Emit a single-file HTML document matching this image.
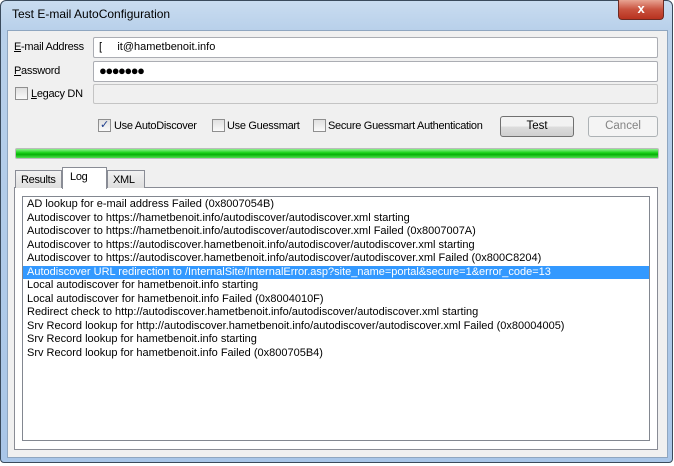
<!DOCTYPE html>
<html><head><meta charset="utf-8"><style>
*{margin:0;padding:0;box-sizing:border-box}
body{width:674px;height:466px;background:#fff;position:relative;overflow:hidden;font-family:"Liberation Sans",sans-serif;font-size:11px;letter-spacing:-0.3px;color:#000}
.a{position:absolute}
.frame{left:0;top:0;width:673px;height:463px;border:1px solid #3a4a5c;border-radius:6px 6px 4px 4px;background:linear-gradient(#c9dcf0,#b8d0ea 30px,#a9c6e8)}
.client{left:7px;top:30px;width:661px;height:428px;background:#f0f0f0;border:1px solid #8fa6c0}
.inp{background:#fff;border:1px solid #abadb3;border-radius:2px}
.cb{width:13px;height:13px;border:1px solid #8f8f8f;background:linear-gradient(#e0e0e0,#fafafa);}
.btn{border:1px solid #707070;border-radius:3px;background:linear-gradient(#f2f2f2 50%,#dddddd 50%,#cfcfcf);text-align:center;line-height:19px;font-size:11.5px;letter-spacing:0}
.log div{height:13.5px;line-height:13.5px;white-space:nowrap;padding-left:4px;font-size:11px;letter-spacing:0}
</style></head><body>
<div class="a frame"></div>
<div class="a" style="left:12px;top:7px;font-size:12px;letter-spacing:0;color:#000">Test E-mail AutoConfiguration</div>
<div class="a" style="left:618px;top:0;width:46px;height:20px;border:1px solid #6d2a22;border-top:none;border-radius:0 0 4px 4px;background:linear-gradient(#e8a493,#c9523e 50%,#b8321f);color:#fff;font-weight:bold;font-size:13px;text-align:center;line-height:18px">x</div>
<div class="a client"></div>
<div class="a" style="left:14px;top:41px"><u>E</u>-mail Address</div>
<div class="a" style="left:14px;top:65px"><u>P</u>assword</div>
<div class="a cb" style="left:15px;top:87px"></div>
<div class="a" style="left:31px;top:88px"><u>L</u>egacy DN</div>
<div class="a inp" style="left:93px;top:37px;width:565px;height:21px;padding:3px 5px;letter-spacing:0">[&nbsp;&nbsp;&nbsp;&nbsp;&nbsp;it@hametbenoit.info</div>
<div class="a inp" style="left:93px;top:61px;width:565px;height:21px;padding:1px 5px;font-size:13px;letter-spacing:-1.5px">●●●●●●●</div>
<div class="a inp" style="left:93px;top:84px;width:565px;height:20px;background:#f0f0f0;border-color:#c4c4c4"></div>
<div class="a cb" style="left:98px;top:119px;color:#1d3c8c;font-size:11px;line-height:11px;text-align:center">✓</div>
<div class="a" style="left:114px;top:120px">Use AutoDiscover</div>
<div class="a cb" style="left:212px;top:119px"></div>
<div class="a" style="left:227px;top:120px">Use Guessmart</div>
<div class="a cb" style="left:313px;top:119px"></div>
<div class="a" style="left:328px;top:120px">Secure Guessmart Authentication</div>
<div class="a btn" style="left:500px;top:116px;width:74px;height:21px">Test</div>
<div class="a btn" style="left:588px;top:116px;width:70px;height:21px;border-color:#adb2b5;background:#f4f4f4;color:#838383">Cancel</div>
<div class="a" style="left:15px;top:148px;width:644px;height:11px;border:1px solid #bcbcbc;border-radius:2px;background:linear-gradient(#8ef08e,#1ed41e 40%,#06b006 60%,#4ee04e)"></div>
<div class="a" style="left:14px;top:187px;width:644px;height:263px;border:1px solid #898c95;background:#fff"></div>
<div class="a" style="left:15px;top:170px;width:47px;height:18px;border:1px solid #898c95;border-bottom:none;background:linear-gradient(#f2f2f2,#dedede);padding:3px 0 0 5px">Results</div>
<div class="a" style="left:107px;top:170px;width:38px;height:18px;border:1px solid #898c95;border-bottom:none;background:linear-gradient(#f2f2f2,#dedede);padding:3px 0 0 5px">XML</div>
<div class="a" style="left:62px;top:167px;width:45px;height:22px;border:1px solid #898c95;border-bottom:none;background:#fff;padding:3px 0 0 7px">Log</div>
<div class="a log" style="left:22px;top:196px;width:628px;height:245px;border:1px solid #828790;background:#fff;padding-top:1px">
<div>AD lookup for e-mail address Failed (0x8007054B)</div>
<div>Autodiscover to https://hametbenoit.info/autodiscover/autodiscover.xml starting</div>
<div>Autodiscover to https://hametbenoit.info/autodiscover/autodiscover.xml Failed (0x8007007A)</div>
<div>Autodiscover to https://autodiscover.hametbenoit.info/autodiscover/autodiscover.xml starting</div>
<div>Autodiscover to https://autodiscover.hametbenoit.info/autodiscover/autodiscover.xml Failed (0x800C8204)</div>
<div style="background:#3399ff;color:#fff">Autodiscover URL redirection to /InternalSite/InternalError.asp?site_name=portal&amp;secure=1&amp;error_code=13</div>
<div>Local autodiscover for hametbenoit.info starting</div>
<div>Local autodiscover for hametbenoit.info Failed (0x8004010F)</div>
<div>Redirect check to http://autodiscover.hametbenoit.info/autodiscover/autodiscover.xml starting</div>
<div>Srv Record lookup for http://autodiscover.hametbenoit.info/autodiscover/autodiscover.xml Failed (0x80004005)</div>
<div>Srv Record lookup for hametbenoit.info starting</div>
<div>Srv Record lookup for hametbenoit.info Failed (0x800705B4)</div>
</div>
</body></html>
